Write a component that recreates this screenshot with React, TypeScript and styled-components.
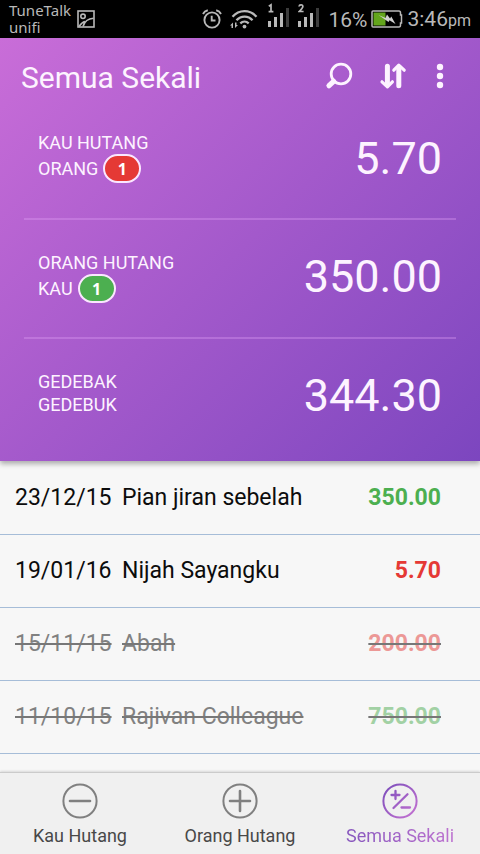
import React from "react";
import styled, { createGlobalStyle, css } from "styled-components";

const GlobalStyle = createGlobalStyle`
  *, *::before, *::after { box-sizing: border-box; }
  body {
    margin: 0;
    background: #f7f7f7;
    color: #0c0c0c;
    font-family: Roboto, "Noto Sans", sans-serif;
  }
`;

const Screen = styled.div`
  display: flex;
  flex-direction: column;
  min-height: 100vh;
`;

const StatusBar = styled.div`
  display: flex;
  align-items: center;
  justify-content: space-between;
  height: 38px;
  padding: 0 9px;
  background: #000;
  color: #b9b9b9;
`;

const StatusGroup = styled.div<{ $gap: number }>`
  display: flex;
  align-items: center;
  gap: ${(p) => p.$gap}px;
`;

const Carrier = styled.div`
  font: 15px/17px "Noto Sans", sans-serif;
`;

const StatusText = styled.span`
  font-size: 21px;
  line-height: 38px;
  padding-top: 2px;

  small {
    font-size: 16px;
  }
`;

const Header = styled.header`
  position: relative;
  background: linear-gradient(135deg, #c96dd8 0%, #a359cb 50%, #7c46bf 100%);
  box-shadow: 0 3px 5px rgba(0, 0, 0, 0.3);
  color: #fdf3ff;
`;

const Toolbar = styled.div`
  display: flex;
  align-items: center;
  justify-content: space-between;
  height: 62px;
  padding: 18px 29px 0 21px;
`;

const Title = styled.h1`
  margin: 0;
  font-size: 30px;
  font-weight: 400;
  line-height: 36px;
`;

const Actions = styled.div`
  display: flex;
  gap: 18px;
  padding-bottom: 4px;
`;

const IconButton = styled.button<{ $narrow?: boolean }>`
  display: flex;
  align-items: center;
  justify-content: center;
  width: ${(p) => (p.$narrow ? 22 : 36)}px;
  height: 36px;
  padding: 0;
  border: 0;
  background: none;
  color: inherit;
  cursor: pointer;
`;

const Totals = styled.div`
  padding: 0 24px 5px;
`;

const TotalRow = styled.section`
  display: flex;
  align-items: center;
  justify-content: space-between;
  height: 118px;
  padding: 0 14px;

  & + & {
    height: 119px;
    padding-bottom: 3px;
    border-top: 2px solid rgba(226, 160, 246, 0.34);
  }
`;

const TotalLabel = styled.h2`
  align-self: flex-start;
  margin: 0;
  padding-top: 31px;
  font-size: 18px;
  font-weight: 400;
  line-height: 23px;
`;

const LabelLine = styled.span`
  display: flex;
  align-items: center;
  gap: 5px;
`;

const Badge = styled.span<{ $tone: Tone }>`
  display: flex;
  align-items: center;
  justify-content: center;
  width: 38px;
  height: 29px;
  border: 2px solid #fbe6ff;
  border-radius: 15px;
  background: ${(p) => tones[p.$tone]};
  color: #fff;
  font: bold 16px/24px "Noto Sans", sans-serif;
`;

const TotalAmount = styled.p`
  margin: 0;
  font-size: 45px;
  line-height: 52px;
`;

const Content = styled.main`
  flex: 1;
  padding-top: 1px;
`;

const DebtTable = styled.table`
  width: 100%;
  border-collapse: separate;
  border-spacing: 0;
  font-size: 23px;
  line-height: 28px;
`;

const DebtRow = styled.tr<{ $settled: boolean }>`
  td {
    height: 73px;
    padding: 0;
    border-bottom: 1px solid #a6bdd8;
    text-align: left;
    white-space: nowrap;
  }

  ${(p) =>
    p.$settled &&
    css`
      color: #818181;
      td > span {
        text-decoration: line-through 2px #777;
      }
    `}
`;

const DateCell = styled.td`
  width: 122px;

  & > span {
    margin-left: 15px;
  }
`;

const AmountCell = styled.td<{ $tone: Tone; $settled: boolean }>`
  && {
    text-align: right;
    padding-right: 39px;
  }
  color: ${(p) => (p.$settled ? fadedTones : tones)[p.$tone]};
  font-weight: 700;
`;

const TabBar = styled.nav`
  display: grid;
  grid-template-columns: repeat(3, 1fr);
  height: 82px;
  border-top: 1px solid #cbcbcb;
  background: #f0f0f0;
  box-shadow: 0 -1px 2px rgba(0, 0, 0, 0.12);
`;

const Tab = styled.button<{ $active: boolean }>`
  display: flex;
  flex-direction: column;
  align-items: center;
  gap: 5px;
  padding: 10px 0 0;
  border: 0;
  background: none;
  color: #808080;
  font-family: inherit;
  font-size: 18px;
  line-height: 24px;
  cursor: pointer;

  span {
    color: ${(p) => (p.$active ? "transparent" : "#484848")};
    background: ${(p) => (p.$active ? "linear-gradient(90deg, #8656bd, #bd72d0)" : "none")};
    background-clip: text;
  }
`;

type Tone = "owe" | "owed";
const tones: Record<Tone, string> = { owe: "#e53935", owed: "#4caf50" };
const fadedTones: Record<Tone, string> = { owe: "#ec9896", owed: "#a2d1a4" };

const totals: { lines: string[]; amount: string; count?: number; tone?: Tone }[] = [
  { lines: ["KAU HUTANG", "ORANG"], amount: "5.70", count: 1, tone: "owe" },
  { lines: ["ORANG HUTANG", "KAU"], amount: "350.00", count: 1, tone: "owed" },
  { lines: ["GEDEBAK", "GEDEBUK"], amount: "344.30" },
];

const debts: { date: string; name: string; amount: string; tone: Tone; settled: boolean }[] = [
  { date: "23/12/15", name: "Pian jiran sebelah", amount: "350.00", tone: "owed", settled: false },
  { date: "19/01/16", name: "Nijah Sayangku", amount: "5.70", tone: "owe", settled: false },
  { date: "15/11/15", name: "Abah", amount: "200.00", tone: "owe", settled: true },
  { date: "11/10/15", name: "Rajivan Colleague", amount: "750.00", tone: "owed", settled: true },
];

const PictureIcon = () => (
  <svg width="18" height="18" viewBox="0 0 18 18" fill="none" stroke="currentColor" strokeWidth="1.6" aria-hidden="true">
    <rect x="1" y="1" width="16" height="16" />
    <circle cx="6" cy="6.3" r="2.2" />
    <path d="M2 16.500C4 13.500 5.500 12 8 11.500M6 16.500C7.500 11.500 11 8.600 16.500 8.300" />
  </svg>
);

const AlarmIcon = () => (
  <svg width="20" height="20" viewBox="0 0 20 20" fill="none" stroke="currentColor" strokeWidth="1.9" aria-hidden="true">
    <circle cx="10" cy="11" r="7.600" />
    <path d="M9.700 6.800V11.500H13.500M1 5Q2.500 2 5.800 1.300M19 5Q17.500 2 14.200 1.300" />
  </svg>
);

const WifiIcon = () => (
  <svg width="30" height="20" viewBox="0 0 30 20" fill="none" stroke="currentColor" strokeWidth="2.300" aria-hidden="true">
    <path d="M2.500 7.800C9 .3 20 .3 26.500 7.800M6.500 11.300C11 6.300 18.200 6.300 22.500 11.300M10.300 14.300C12.800 12 16.200 12 18.700 14.300" />
    <circle cx="14.500" cy="17.600" r="1.900" fill="currentColor" stroke="none" />
    <path d="M0 16.500l3-3v5.500H1.500V16.500zM5 13.500h1.500V16H8l-3 3z" fill="currentColor" stroke="none" />
  </svg>
);

const SignalIcon = ({ sim }: { sim: number }) => (
  <svg width="22" height="32" viewBox="0 0 22 32" fill="currentColor" role="img" aria-label={`SIM ${sim}`}>
    {sim === 1 ? (
      <path d="M.8 3.200L3 1.800V8.300M.6 8.600H5.400" fill="none" stroke="currentColor" strokeWidth="1.700" />
    ) : (
      <path d="M1 3.500Q1.200 1.800 3 1.800 5 1.800 4.800 3.800 4.600 5 1.200 8.500H5.600" fill="none" stroke="currentColor" strokeWidth="1.700" />
    )}
    <rect x="0" y="18" width="3" height="6" />
    <rect x="6" y="14" width="3" height="10" />
    <rect x="12" y="10" width="3" height="14" />
    <rect x="18" y="5" width="3" height="19" fill="#3c3c3c" />
  </svg>
);

const BatteryIcon = () => (
  <svg width="32" height="18" viewBox="0 0 32 18" aria-hidden="true">
    <path d="M2 1h26q1.500 0 1.500 2v2h1v8h-1v2q0 2-1.500 2H2Q1 17 1 16V2Q1 1 2 1z" fill="none" stroke="currentColor" strokeWidth="1.500" />
    <rect x="2.500" y="2.500" width="12" height="13" fill="#63a51c" />
    <path d="M7.500 5L14.500 8l1.500-3.500 3 4 1.300-2L24.500 14 18.500 10.300l-1 1.700z" fill="#d0d0d0" />
  </svg>
);

const SearchIcon = () => (
  <svg width="28" height="28" viewBox="0 0 28 28" fill="none" stroke="currentColor" strokeLinecap="round" aria-hidden="true">
    <circle cx="16" cy="12" r="9.800" strokeWidth="2.800" />
    <path d="M8.600 19.300L4 23.700" strokeWidth="5.200" />
  </svg>
);

const SortIcon = () => (
  <svg width="28" height="28" viewBox="0 0 28 28" fill="none" stroke="currentColor" strokeLinecap="round" strokeLinejoin="round" aria-hidden="true">
    <path d="M8.400 4.300V22M19.800 6V23.700" strokeWidth="5" />
    <path d="M3 19.800L8.400 24.800 13.400 19.800M14.800 8.200L19.800 3.200 25.200 8.200" strokeWidth="3.200" />
  </svg>
);

const MoreIcon = () => (
  <svg width="8" height="28" viewBox="0 0 8 28" fill="currentColor" aria-hidden="true">
    <circle cx="4" cy="5" r="3.200" />
    <circle cx="4" cy="14" r="3.200" />
    <circle cx="4" cy="23" r="3.200" />
  </svg>
);

const TabIcon = ({ kind }: { kind: string }) => (
  <svg width="36" height="36" viewBox="0 0 36 36" fill="none" stroke={kind === "all" ? "url(#tab-accent)" : "currentColor"} strokeWidth="2" strokeLinecap="round" aria-hidden="true">
    <defs>
      <linearGradient id="tab-accent" gradientUnits="userSpaceOnUse" x1="4" y1="4" x2="32" y2="32">
        <stop offset="0" stopColor="#8050bc" />
        <stop offset="1" stopColor="#c070d0" />
      </linearGradient>
    </defs>
    <circle cx="18" cy="18" r="16.600" />
    {kind === "minus" && <path d="M8 18H28" strokeWidth="2.600" />}
    {kind === "plus" && <path d="M8 18H28M18 8V28" strokeWidth="2.600" />}
    {kind === "all" && <path d="M9.500 12H17.500M13.500 8V16M11.500 25L25.500 11.200M19.500 24.500H28" strokeWidth="2.300" />}
  </svg>
);

const tabs = [
  { kind: "minus", label: "Kau Hutang" },
  { kind: "plus", label: "Orang Hutang" },
  { kind: "all", label: "Semua Sekali" },
];

export default function App() {
  return (
    <>
      <GlobalStyle />
      <Screen>
        <StatusBar>
          <StatusGroup $gap={6}>
            <Carrier>
              TuneTalk
              <br />
              unifi
            </Carrier>
            <PictureIcon />
          </StatusGroup>
          <StatusGroup $gap={8}>
            <AlarmIcon />
            <WifiIcon />
            <SignalIcon sim={1} />
            <SignalIcon sim={2} />
            <StatusGroup $gap={4}>
              <StatusText>16%</StatusText>
              <BatteryIcon />
              <StatusText>
                3:46<small>pm</small>
              </StatusText>
            </StatusGroup>
          </StatusGroup>
        </StatusBar>

        <Header>
          <Toolbar>
            <Title>Semua Sekali</Title>
            <Actions>
              <IconButton type="button" aria-label="Cari">
                <SearchIcon />
              </IconButton>
              <IconButton type="button" aria-label="Susun">
                <SortIcon />
              </IconButton>
              <IconButton type="button" $narrow aria-label="Menu">
                <MoreIcon />
              </IconButton>
            </Actions>
          </Toolbar>
          <Totals>
            {totals.map((total) => (
              <TotalRow key={total.amount}>
                <TotalLabel>
                  {total.lines.map((line, i) => (
                    <LabelLine key={line}>
                      {line}
                      {i === 1 && total.tone && <Badge $tone={total.tone}>{total.count}</Badge>}
                    </LabelLine>
                  ))}
                </TotalLabel>
                <TotalAmount>{total.amount}</TotalAmount>
              </TotalRow>
            ))}
          </Totals>
        </Header>

        <Content>
          <DebtTable>
            <tbody>
              {debts.map((debt) => (
                <DebtRow key={debt.date} $settled={debt.settled}>
                  <DateCell>
                    <span>{debt.date}</span>
                  </DateCell>
                  <td>
                    <span>{debt.name}</span>
                  </td>
                  <AmountCell $tone={debt.tone} $settled={debt.settled}>
                    <span>{debt.amount}</span>
                  </AmountCell>
                </DebtRow>
              ))}
            </tbody>
          </DebtTable>
        </Content>

        <TabBar>
          {tabs.map((tab) => (
            <Tab key={tab.kind} type="button" $active={tab.kind === "all"} aria-current={tab.kind === "all" ? "page" : undefined}>
              <TabIcon kind={tab.kind} />
              <span>{tab.label}</span>
            </Tab>
          ))}
        </TabBar>
      </Screen>
    </>
  );
}
